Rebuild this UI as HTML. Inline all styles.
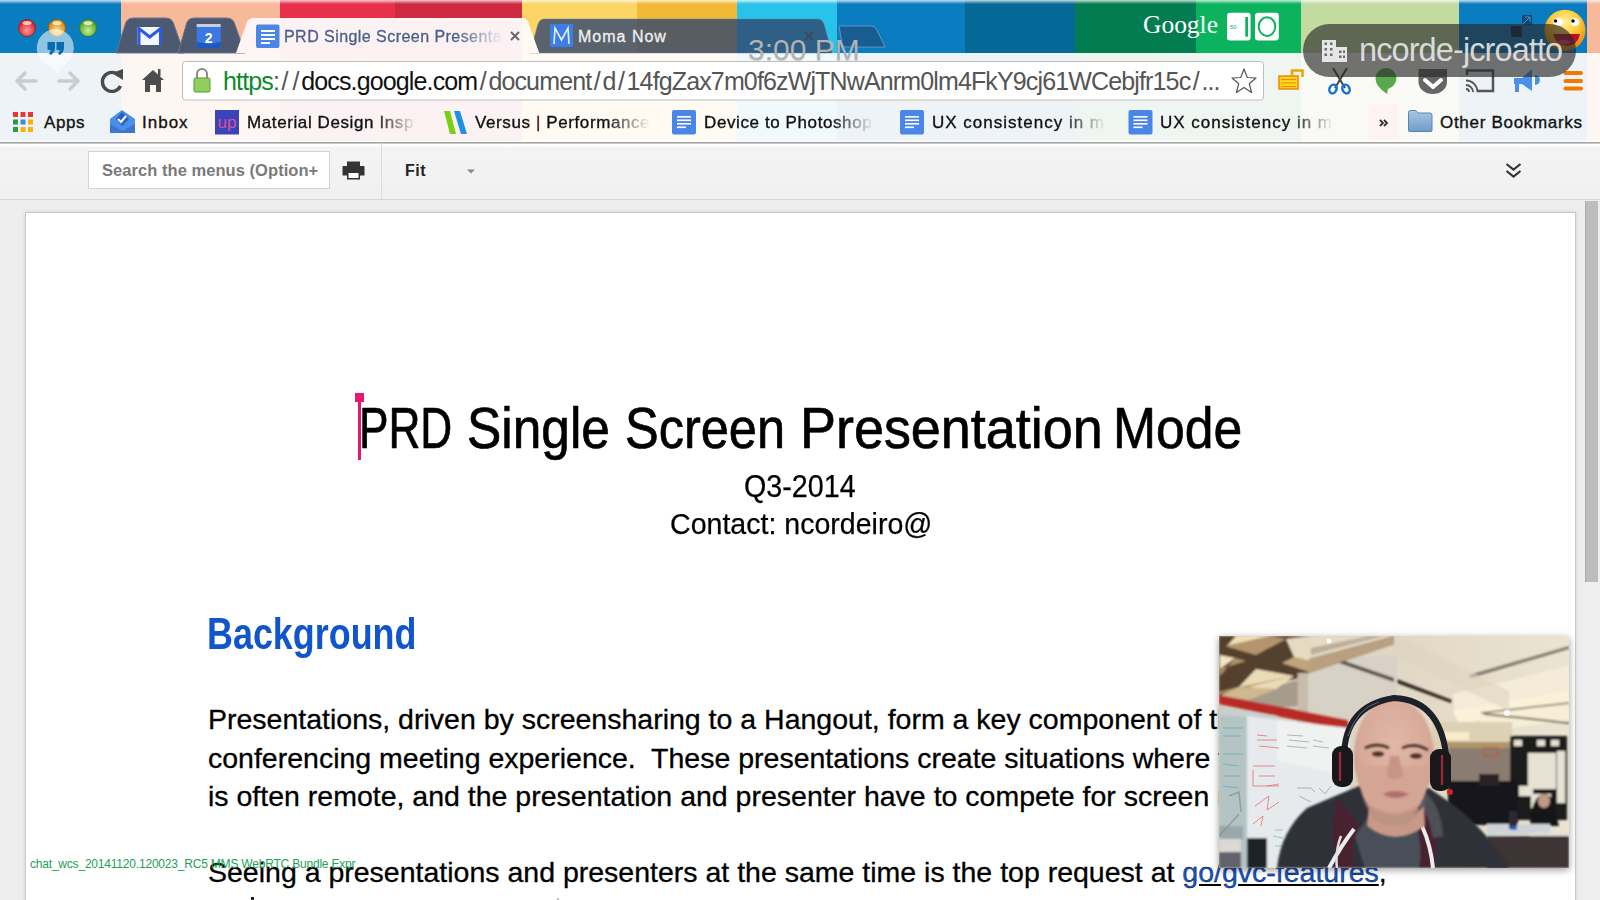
<!DOCTYPE html>
<html><head><meta charset="utf-8">
<style>
*{margin:0;padding:0;box-sizing:border-box}
html,body{width:1600px;height:900px;overflow:hidden;background:#eeeeee;font-family:"Liberation Sans",sans-serif;position:relative}
.a{position:absolute}
.stripe{position:absolute;top:0;height:53px}
.tint{position:absolute;top:53px;height:89px}
.bm{position:absolute;top:113px;font-size:17px;color:#111;white-space:nowrap;letter-spacing:0.6px;-webkit-text-stroke:0.35px #111}
.fade{-webkit-mask-image:linear-gradient(90deg,#000 75%,transparent 100%)}
.tabt{-webkit-mask-image:linear-gradient(90deg,#000 78%,transparent 100%)}
.doc{position:absolute;white-space:nowrap;color:#000}
.tt{top:395px;font-size:57px;-webkit-text-stroke:0.7px #000;transform-origin:0 0}
</style></head><body>

<!-- HEADER -->
<svg class="a" style="left:0;top:0" width="1600" height="143" viewBox="0 0 1600 143">
 <g>
  <rect x="0" y="0" width="121" height="53" fill="#0a7dc0"/>
  <rect x="121" y="0" width="159" height="53" fill="#f8b89a"/>
  <rect x="280" y="0" width="115" height="53" fill="#e8304a"/>
  <rect x="395" y="0" width="127" height="53" fill="#cd2940"/>
  <rect x="522" y="0" width="115" height="53" fill="#fdd466"/>
  <rect x="637" y="0" width="100" height="53" fill="#f2b937"/>
  <rect x="737" y="0" width="100" height="53" fill="#27c3ea"/>
  <rect x="837" y="0" width="128" height="53" fill="#0a7dc0"/>
  <rect x="965" y="0" width="110" height="53" fill="#066896"/>
  <rect x="1075" y="0" width="121" height="53" fill="#027c50"/>
  <rect x="1196" y="0" width="105" height="53" fill="#0bb35e"/>
  <rect x="1301" y="0" width="158" height="53" fill="#c2dca0"/>
  <rect x="1459" y="0" width="128" height="53" fill="#0a7dc0"/>
  <rect x="1587" y="0" width="13" height="53" fill="#f8b89a"/>
  <defs><linearGradient id="hl" x1="0" y1="0" x2="0" y2="1"><stop offset="0" stop-color="#fff" stop-opacity="0.75"/><stop offset="1" stop-color="#fff" stop-opacity="0"/></linearGradient></defs>
 <rect x="0" y="0" width="1600" height="4" fill="url(#hl)"/>
 </g>
 <g>
  <rect x="0" y="53" width="121" height="89" fill="#eef3f8"/>
  <rect x="121" y="53" width="159" height="89" fill="#fef6f3"/>
  <rect x="280" y="53" width="242" height="89" fill="#fcf2f3"/>
  <rect x="522" y="53" width="215" height="89" fill="#fffbf3"/>
  <rect x="737" y="53" width="100" height="89" fill="#f0f9fc"/>
  <rect x="837" y="53" width="238" height="89" fill="#eef3f8"/>
  <rect x="1075" y="53" width="226" height="89" fill="#eff6f1"/>
  <rect x="1301" y="53" width="158" height="89" fill="#f9faf6"/>
  <rect x="1459" y="53" width="128" height="89" fill="#eef3f8"/>
  <rect x="1587" y="53" width="13" height="89" fill="#fef6f3"/>
  <rect x="1368" y="104" width="31" height="36" fill="#fdf3f3"/>
  <rect x="0" y="140.5" width="1600" height="1.5" fill="#fff" opacity="0.8"/>
  <rect x="0" y="142" width="1600" height="1" fill="#a3a3a3"/>
 </g>
 <!-- traffic lights -->
 <defs>
  <radialGradient id="gr" cx="50%" cy="65%" r="55%"><stop offset="0" stop-color="#ff9a9a"/><stop offset="1" stop-color="#d8232a"/></radialGradient>
  <radialGradient id="go" cx="50%" cy="65%" r="55%"><stop offset="0" stop-color="#ffe08a"/><stop offset="1" stop-color="#d98a12"/></radialGradient>
  <radialGradient id="gg" cx="50%" cy="65%" r="55%"><stop offset="0" stop-color="#c8f0a0"/><stop offset="1" stop-color="#58a822"/></radialGradient>
 </defs>
 <circle cx="27" cy="28" r="8.5" fill="url(#gr)" stroke="#9a1a1a" stroke-width="0.8"/>
 <circle cx="57" cy="28" r="8.5" fill="url(#go)" stroke="#9a5a10" stroke-width="0.8"/>
 <circle cx="88" cy="28" r="8.5" fill="url(#gg)" stroke="#3a7a18" stroke-width="0.8"/>
 <ellipse cx="27" cy="23" rx="4.5" ry="2" fill="#fff" opacity="0.7"/>
 <ellipse cx="57" cy="23" rx="4.5" ry="2" fill="#fff" opacity="0.7"/>
 <ellipse cx="88" cy="23" rx="4.5" ry="2" fill="#fff" opacity="0.7"/>
 <!-- inactive tabs -->
 <path d="M544 19 Q540 19 538 24 L530 53 L832 53 L824 24 Q822 19 818 19 Z" fill="rgb(49,70,110)" fill-opacity="0.8" stroke="#5f7fa0" stroke-opacity="0.5" stroke-width="1"/>
 <path d="M839 26 L871 26 Q875 26 877 30 L885 47 L846 47 Q843 47 842 44 Z" fill="rgb(40,60,100)" fill-opacity="0.5" stroke="#8fb0d0" stroke-opacity="0.6"/>
 <path d="M116 53 L126 22 Q128 18 133 18 L166 18 Q171 18 173 22 L184 53 Z" fill="#4d5971" stroke="#6a7590" stroke-width="1"/>
 <path d="M178 53 L187 22 Q189 18 194 18 L227 18 Q232 18 234 22 L245 53 Z" fill="#4d5971" stroke="#6a7590" stroke-width="1"/>
 <!-- active tab -->
 <path d="M236 53 L247 22 Q249 18 254 18 L521 18 Q526 18 528 22 L539 53 Z" fill="#fdf5f3"/>
 <rect x="280" y="18" width="242" height="35" fill="#fcf2f3"/>
 <path d="M522 18 Q526 18 528 22 L539 53 L522 53 Z" fill="#fffbf3"/>
 <!-- tab icons -->
 <rect x="137.5" y="27" width="24.5" height="18" fill="#f4f6ff"/>
 <path d="M139 45 V28.5 L149.75 37 L160.5 28.5 V45" fill="none" stroke="#2a5ce0" stroke-width="3"/>
 <rect x="196.7" y="24" width="24" height="3" fill="#c8d0dc"/>
 <rect x="196.7" y="27" width="24" height="21" fill="#3a78e6"/>
 <path d="M196.7 42 L208.7 44 L220.7 42 V48 H196.7 Z" fill="#1f58c0"/>
 <text x="208.7" y="43" font-family="Liberation Sans" font-size="14" font-weight="bold" fill="#fff" text-anchor="middle">2</text>
 <rect x="256" y="24.5" width="23.5" height="23.5" rx="2" fill="#4a86e8"/>
 <rect x="261" y="30" width="14" height="2" fill="#fff"/>
 <rect x="261" y="34" width="14" height="2" fill="#fff"/>
 <rect x="261" y="38" width="14" height="2" fill="#fff"/>
 <rect x="261" y="42" width="9" height="2" fill="#fff"/>
 <rect x="550" y="24" width="23" height="23" fill="#3d7de8"/>
 <path d="M554 44 L555 28 L561.5 40 L568 28 L569 44" fill="none" stroke="#e8f0ff" stroke-width="1.6"/>
 <path d="M511 32 L519 40 M519 32 L511 40" stroke="#666" stroke-width="2"/>
 <path d="M805 32 L813 40 M813 32 L805 40" stroke="#3a4a5a" stroke-width="2"/>
 <!-- hangouts bubble -->
 <g fill="#fff" fill-opacity="0.55"><path d="M56 29 A19 19 0 0 0 51.5 66.5 L57 74 L66.5 63 A19 19 0 0 0 56 29 Z"/></g>
 <path d="M47.5 42 h7.5 v6 q0 4.5 -4.5 7 l-1.5 -1.5 q1.6 -1.5 1.6 -3.5 h-3.1 Z M56.5 42 h7.5 v6 q0 4.5 -4.5 7 l-1.5 -1.5 q1.6 -1.5 1.6 -3.5 h-3.1 Z" fill="#0a6cb0"/>
 <!-- google io -->
 <text x="1143" y="32.5" font-family="Liberation Serif" font-size="26" fill="#fff" textLength="75" lengthAdjust="spacingAndGlyphs">Google</text>
 <rect x="1227" y="12.8" width="23.6" height="27.6" rx="3" fill="#fff"/>
 <rect x="1255" y="12.8" width="23.8" height="27.6" rx="3" fill="#fff"/>
 <rect x="1245.3" y="17" width="2.7" height="19.7" fill="#0bb35e"/>
 <ellipse cx="1267" cy="26.6" rx="8.3" ry="9.3" fill="none" stroke="#0bb35e" stroke-width="2"/>
 <text x="1230" y="29" font-family="Liberation Sans" font-size="6" fill="#0bb35e">50</text>
 <!-- emoji -->
 <defs><radialGradient id="emo" cx="50%" cy="30%" r="65%"><stop offset="0" stop-color="#fff0a0"/><stop offset="0.55" stop-color="#ffc830"/><stop offset="1" stop-color="#e88a10"/></radialGradient></defs>
 <circle cx="1565" cy="30.3" r="20.5" fill="url(#emo)"/>
 <ellipse cx="1558" cy="22" rx="5" ry="4" fill="#fff"/>
 <ellipse cx="1575" cy="22" rx="4.5" ry="4" fill="#fff"/>
 <circle cx="1555.5" cy="21" r="1.8" fill="#111"/>
 <circle cx="1573" cy="21" r="1.8" fill="#111"/>
 <path d="M1553 34 L1580 34 Q1578 45 1567 46 Q1556 45 1553 34 Z" fill="#b8102a"/>
 <ellipse cx="1564" cy="42" rx="6" ry="2.5" fill="#e04060"/>
 <!-- expand icon -->
 <rect x="1522" y="15" width="10" height="10" fill="#0a4a78"/>
 <rect x="1511" y="26" width="11" height="11" fill="#06304e"/>
 <path d="M1522 25 L1530 17 M1525 17 H1530 V22" fill="none" stroke="#6ab0e0" stroke-width="1" opacity="0.7"/>
 <!-- nav icons -->
 <path d="M17 81 L36 81 M25 73 L17 81 L25 89" fill="none" stroke="#c9cdd2" stroke-width="3.5" stroke-linecap="round" stroke-linejoin="round"/>
 <path d="M59 81 L78 81 M70 73 L78 81 L70 89" fill="none" stroke="#c9cdd2" stroke-width="3.5" stroke-linecap="round" stroke-linejoin="round"/>
 <path d="M119 75.5 A9.5 9.5 0 1 0 120.5 86" fill="none" stroke="#4a4a4a" stroke-width="3.4"/>
 <path d="M112 73 L123 69 L123 80 Z" fill="#4a4a4a"/>
 <path d="M153 70 L142 80 L145 80 L145 92 L150 92 L150 85 L156 85 L156 92 L161 92 L161 80 L164 80 Z" fill="#4d4d4d"/>
 <rect x="158" y="69" width="2.5" height="7" fill="#4d4d4d"/>
 <!-- omnibox -->
 <rect x="182.5" y="61.5" width="1081" height="38.5" rx="3" fill="#fff" stroke="#bdbdbd"/>
 <rect x="194" y="78" width="16" height="14" rx="1.5" fill="#8fcf5c" stroke="#5a9a30"/>
 <path d="M197 78 V74 A5 5 0 0 1 207 74 V78" fill="none" stroke="#888" stroke-width="2"/>
 <path d="M1244 69 L1247.3 77.5 L1256 78 L1249.3 83.8 L1251.6 92.5 L1244 87.6 L1236.4 92.5 L1238.7 83.8 L1232 78 L1240.7 77.5 Z" fill="#fff" stroke="#555" stroke-width="1.2" stroke-linejoin="round"/>
 <!-- extension icons -->
 <rect x="1279" y="76" width="19" height="13" fill="#ffd21f" stroke="#f08a00" stroke-width="1.5"/>
 <path d="M1281 79.5 h15 M1281 83 h15 M1281 86.5 h15" stroke="#f08a00" stroke-width="1.2"/>
 <path d="M1292 76 V70.5 H1302.5 V77" fill="none" stroke="#f0a000" stroke-width="2.5"/>
 <path d="M1333 68 L1345 88 M1347 68 L1335 88" stroke="#444" stroke-width="2"/>
 <ellipse cx="1333" cy="89" rx="3.5" ry="4.5" fill="none" stroke="#1a6fd8" stroke-width="2.5" transform="rotate(25 1333 89)"/>
 <ellipse cx="1346" cy="89" rx="3.5" ry="4.5" fill="none" stroke="#1a6fd8" stroke-width="2.5" transform="rotate(-25 1346 89)"/>
 <path d="M1386 68 A10.5 10 0 0 1 1396.5 78 Q1396 86 1388 89 L1387 94 Q1375 86 1375.5 78 A10.5 10 0 0 1 1386 68 Z" fill="#5aa84d"/>
 <path d="M1418.5 69 H1447 V82 A14.25 12 0 0 1 1418.5 82 Z" fill="#666"/>
 <path d="M1425 80 L1433 87 L1441 80" fill="none" stroke="#fff" stroke-width="4" stroke-linecap="round" stroke-linejoin="round"/>
 <path d="M1467 75 V70.5 H1493 V91 H1477" fill="none" stroke="#555" stroke-width="2.5"/>
 <path d="M1466 85 A7 7 0 0 1 1473 92 M1466 80.5 A11.5 11.5 0 0 1 1477.5 92 M1466 89 A3 3 0 0 1 1469 92" fill="none" stroke="#555" stroke-width="1.8"/>
 <path d="M1514 78 H1522 L1532 69 V91 L1522 84 H1519 V92 H1515 V84 H1514 Z" fill="#4a8fe8"/>
 <path d="M1535 75 A5 5 0 0 1 1535 85 Z" fill="#4a8fe8"/>
 <rect x="1563.5" y="71" width="19.5" height="4" rx="2" fill="#f07a00"/>
 <rect x="1563.5" y="79" width="19.5" height="4" rx="2" fill="#f07a00"/>
 <rect x="1563.5" y="86.5" width="19.5" height="4" rx="2" fill="#f07a00"/>
 <!-- bookmark icons -->
 <g fill="#e33">
  <rect x="13" y="112" width="5" height="5"/><rect x="20.5" y="112" width="5" height="5"/><rect x="28" y="112" width="5" height="5" fill="#e33"/>
 </g>
 <rect x="13" y="119.5" width="5" height="5" fill="#2a9a4a"/><rect x="20.5" y="119.5" width="5" height="5" fill="#3a88f0"/><rect x="28" y="119.5" width="5" height="5" fill="#f5b400"/>
 <rect x="13" y="127" width="5" height="5" fill="#2a9a4a"/><rect x="20.5" y="127" width="5" height="5" fill="#f5b400"/><rect x="28" y="127" width="5" height="5" fill="#f5b400"/>
 <path d="M110 119 L122 110 L135 119 L135 133 L110 133 Z" fill="#4a8fe8"/>
 <path d="M110 124 L122.5 131 L135 124 L135 133 L110 133 Z" fill="#3a78d0"/>
 <path d="M116 119 L122 112 L129 119 L122 126 Z" fill="#2a5fc8"/>
 <path d="M118 119 L121 122 L126 116" fill="none" stroke="#fff" stroke-width="2"/>
 <rect x="215" y="110" width="24" height="24.5" fill="#3a44b8"/>
 <text x="227" y="128" font-family="Liberation Sans" font-size="17" fill="#d8509a" text-anchor="middle">up</text>
 <path d="M444 111 L450 111 L456 134 L450 134 Z" fill="#7ad012"/>
 <path d="M454 111 L460 111 L467 134 L461 134 Z" fill="#1e90e8"/>
 <g fill="#4a86e8">
  <rect x="672" y="110" width="24" height="24.5" rx="2"/>
  <rect x="900" y="110" width="24" height="24.5" rx="2"/>
  <rect x="1128.5" y="110" width="24" height="24.5" rx="2"/>
 </g>
 <g fill="#fff">
  <rect x="677" y="116" width="14" height="1.6"/><rect x="677" y="119.5" width="14" height="1.6"/><rect x="677" y="123" width="14" height="1.6"/><rect x="677" y="126.5" width="9" height="1.6"/>
  <rect x="905" y="116" width="14" height="1.6"/><rect x="905" y="119.5" width="14" height="1.6"/><rect x="905" y="123" width="14" height="1.6"/><rect x="905" y="126.5" width="9" height="1.6"/>
  <rect x="1133.5" y="116" width="14" height="1.6"/><rect x="1133.5" y="119.5" width="14" height="1.6"/><rect x="1133.5" y="123" width="14" height="1.6"/><rect x="1133.5" y="126.5" width="9" height="1.6"/>
 </g>
 <path d="M1380 120 L1383 123 L1380 126 M1384 120 L1387 123 L1384 126" fill="none" stroke="#333" stroke-width="1.8"/>
 <defs><linearGradient id="fold" x1="0" y1="0" x2="0" y2="1"><stop offset="0" stop-color="#a9c8e6"/><stop offset="1" stop-color="#6f9cc8"/></linearGradient></defs>
 <path d="M1408.5 112.5 Q1408.5 110.5 1410.5 110.5 L1416 110.5 L1418 113 L1430 113 Q1432 113 1432 115 L1432 130.5 Q1432 131.5 1431 131.5 L1409.5 131.5 Q1408.5 131.5 1408.5 130.5 Z" fill="url(#fold)" stroke="#5a84b0"/>
</svg>
<div class="a" style="left:223px;top:67px;font-size:25px;letter-spacing:-0.86px;white-space:nowrap;color:#555"><span style="color:#0a8a2a">https</span>:<span style="margin:0 2.5px">/</span><span style="margin:0 2.5px">/</span><span style="color:#111">docs.google.com</span><span style="margin:0 2.5px">/</span>document<span style="margin:0 2.5px">/</span>d<span style="margin:0 2.5px">/</span>14fgZax7m0f6zWjTNwAnrm0lm4FkY9cj61WCebjfr15c<span style="margin:0 2.5px">/</span>...</div>
<div class="bm" style="left:44px">Apps</div>
<div class="bm" style="left:142px;letter-spacing:1px">Inbox</div>
<div class="bm fade" style="left:247px;width:170px;overflow:hidden">Material Design Insp</div>
<div class="bm fade" style="left:475px;width:175px;overflow:hidden">Versus <span style="color:#7a1010">|</span> Performance</div>
<div class="bm fade" style="left:704px;width:170px;overflow:hidden">Device to Photoshop</div>
<div class="bm fade" style="left:932px;width:174px;overflow:hidden;letter-spacing:1px">UX consistency in mo</div>
<div class="bm fade" style="left:1160px;width:174px;overflow:hidden;letter-spacing:1px">UX consistency in mo</div>
<div class="bm" style="left:1440px;letter-spacing:0.7px">Other Bookmarks</div>
<div class="a tabt" style="left:284px;top:28px;width:220px;overflow:hidden;font-size:16px;white-space:nowrap;color:#4a5f88;letter-spacing:0.45px;-webkit-text-stroke:0.3px #4a5f88">PRD Single Screen Presentation Mode</div>
<div class="a" style="left:578px;top:28px;font-size:16px;white-space:nowrap;color:#f0f0f0;letter-spacing:1px;-webkit-text-stroke:0.3px #f0f0f0">Moma Now</div>
<div class="a" style="left:748px;top:33px;font-size:30px;white-space:nowrap;color:#b3b3b3;text-shadow:0 1px 1px rgba(0,0,0,0.15)">3:00 PM</div>
<!-- docs toolbar -->
<div class="a" style="left:0;top:143px;width:1600px;height:56px;background:linear-gradient(#c8c8c8 0,#c8c8c8 0.6px,#fff 1px,#fff 3px,#f4f4f4 4px,#f0f0f0 100%)"></div>
<div class="a" style="left:0;top:199px;width:1600px;height:1px;background:#d6d6d6"></div>
<div class="a" style="left:88px;top:151px;width:242px;height:38px;background:#fff;border:1px solid #d3d3d3"></div>
<div class="a" style="left:102px;top:161px;font-size:16.5px;font-weight:bold;color:#7a7a7a;white-space:nowrap;letter-spacing:0.05px">Search the menus (Option+</div>
<div class="a" style="left:381px;top:143px;width:1px;height:56px;background:#dcdcdc"></div>
<svg class="a" style="left:340px;top:158px" width="30" height="26" viewBox="0 0 30 26"><path d="M7 3.5 H20 V8 H7 Z" fill="#333"/><path d="M2.5 9 Q2.5 8 3.5 8 H23.5 Q24.5 8 24.5 9 V17.5 H20 V21.5 H7 V17.5 H2.5 Z" fill="#333"/><rect x="8.5" y="15" width="10" height="5" fill="#fff"/></svg>
<svg class="a" style="left:464px;top:167px" width="14" height="10" viewBox="0 0 14 10"><path d="M3 2.5 H11 L7 6.5 Z" fill="#888"/></svg>
<svg class="a" style="left:1500px;top:158px" width="28" height="26" viewBox="0 0 28 26"><path d="M6.5 6 L13.5 11.5 L20.5 6 M6.5 13 L13.5 18.5 L20.5 13" fill="none" stroke="#333" stroke-width="2.2"/></svg>
<div class="a" style="left:405px;top:162px;font-size:16px;font-weight:bold;color:#222;letter-spacing:0.5px">Fit</div>

<!-- page -->
<div class="a" style="left:25px;top:212px;width:1551px;height:700px;background:#fff;border:1px solid #c9c9c9;box-shadow:0 0 4px rgba(0,0,0,0.12)"></div>
<div class="a" style="left:1585px;top:200px;width:14px;height:700px;background:#efefef"></div>
<div class="a" style="left:1585px;top:201px;width:13px;height:381px;background:#bdbdbd;border-left:1px solid #aaa"></div>

<!-- document text -->
<div class="doc tt" style="left:358.9px;transform:scaleX(0.775)">PRD</div><div class="doc tt" style="left:467.2px;transform:scaleX(0.902)">Single</div><div class="doc tt" style="left:624.5px;transform:scaleX(0.886)">Screen</div><div class="doc tt" style="left:799.7px;transform:scaleX(0.946)">Presentation</div><div class="doc tt" style="left:1113.4px;transform:scaleX(0.907)">Mode</div>
<div class="a" style="left:358px;top:393px;width:3px;height:67px;background:#e8176f"></div>
<div class="a" style="left:355px;top:393px;width:9px;height:9px;background:#e8176f"></div>
<div class="doc" style="left:744px;top:469px;font-size:30.5px;-webkit-text-stroke:0.25px #000;transform:scaleX(0.94);transform-origin:0 0">Q3-2014</div>
<div class="doc" style="left:670px;top:507px;font-size:30px;-webkit-text-stroke:0.25px #000;transform:scaleX(0.952);transform-origin:0 0">Contact: ncordeiro@</div>
<div class="doc" style="left:207px;top:609px;font-size:44px;font-weight:bold;color:#1155cc;transform:scaleX(0.816);transform-origin:0 0">Background</div>
<div class="doc" style="left:208px;top:700px;font-size:28.5px;line-height:38.5px;-webkit-text-stroke:0.3px #000">Presentations, driven by screensharing to a Hangout, form a key component of the<br>conferencing meeting experience.&nbsp; These presentations create situations where the<br>is often remote, and the presentation and presenter have to compete for screen real</div>
<div class="doc" style="left:208px;top:853px;font-size:28.5px;line-height:38.5px;-webkit-text-stroke:0.3px #000">Seeing a presentations and presenters at the same time is the top request at <span style="color:#1155cc;text-decoration:underline">go/gvc-features</span>,</div>
<div class="a" style="left:251px;top:897px;width:3px;height:3px;background:#222"></div>
<div class="a" style="left:557px;top:898px;width:2px;height:2px;background:#bbb"></div>
<div class="a" style="left:30px;top:857px;font-size:12px;letter-spacing:-0.2px;color:#22a05a;white-space:nowrap">chat_wcs_20141120.120023_RC5 MMS WebRTC Bundle Expr</div>

<!-- video -->
<div class="a" style="left:1219px;top:636px;width:350px;height:232px;box-shadow:0 2px 7px rgba(0,0,0,0.4);overflow:hidden">
<svg width="350" height="232" viewBox="0 0 350 232">
 <defs>
  <linearGradient id="ceil" x1="0" y1="0" x2="1" y2="0"><stop offset="0" stop-color="#d4cab8"/><stop offset="1" stop-color="#ece4d2"/></linearGradient>
  <radialGradient id="skin" cx="50%" cy="40%" r="60%"><stop offset="0" stop-color="#e2b8a8"/><stop offset="0.75" stop-color="#d6a898"/><stop offset="1" stop-color="#c09080"/></radialGradient>
  <filter id="bl" x="-10%" y="-10%" width="120%" height="120%"><feGaussianBlur stdDeviation="1.2"/></filter>
  <filter id="bl2" x="-10%" y="-10%" width="120%" height="120%"><feGaussianBlur stdDeviation="2.5"/></filter>
 </defs>
 <rect width="350" height="232" fill="url(#ceil)"/>
 <g filter="url(#bl)">
  <!-- right ceiling light strips -->
  <path d="M234 58 L350 30 L350 60 L236 80 Z" fill="#f4ecd8"/>
  <path d="M234 75 L350 55 L350 70 L240 88 Z" fill="#faf2d8"/>
  <path d="M260 82 L350 68 L350 84 L265 96 Z" fill="#f6eed6"/>
  <path d="M250 39 L350 10 L350 13 L252 42 Z" fill="#5a5048" opacity="0.7"/><path d="M262 76 L350 66 L350 68 L262 78 Z" fill="#5a5048" opacity="0.6"/>
  <path d="M175 42 L233 64 L232 67 L175 46 Z" fill="#302820"/>
  <path d="M265 77 L350 86 L350 88 L265 79 Z" fill="#40342a" opacity="0.7"/>
  <!-- left wall under beams -->
  <rect x="88" y="20" width="90" height="64" fill="#d8d2c6"/>
  <path d="M88 12 L175 42 L175 46 L88 16 Z" fill="#3a3028" opacity="0.8"/>
  <path d="M18 60 L80 44 L84 70 L25 74 Z" fill="#a69c8c"/>
  <!-- beams -->
  <path d="M0 0 L175 0 L175 8 L90 37 L80 42 L0 60 Z" fill="#54402e"/>
  <path d="M17 0 L50 0 L38 9 L8 10 Z" fill="#efe0ba"/>
  <path d="M1 19 L16 22 L1 33 Z" fill="#f2e4c0"/>
  <path d="M37 33 L75 40 L57 53 L20 51 Z" fill="#ecdcb6"/>
  <path d="M75 21 L90 13 L90 25 Z" fill="#eadcc0"/>
  <path d="M6 10 L37 19 L67 3 L50 0 Z" fill="#b4946c"/>
  <path d="M1 33 L27 25 L16 22 L1 40 Z" fill="#b09068"/>
  <path d="M63 27 L90 36 L90 25 L75 21 Z" fill="#c0a47c"/>
  <path d="M0 58 L37 49 L75 40 L20 51 L0 56 Z" fill="#b8986c"/>
  <path d="M0 60 L20 51 L57 53 L30 64 Z" fill="#d0b890"/>
  <path d="M67 3 L92 0 L175 0 L90 23 L75 21 Z" fill="#e6dac2"/>
  <path d="M90 23 L175 0 L175 8 L90 37 Z" fill="#b8a080"/>
  <path d="M92 12 L150 0 L165 0 L92 19 Z" fill="#3a3028" opacity="0.25"/>
  <rect x="78.6" y="37" width="10.3" height="53" fill="#c8bcac"/>
  <!-- red stripe -->
  <path d="M0 59 L129 84 L129 95 L0 68 Z" fill="#b82a26"/>
  <!-- glass + whiteboard -->
  <path d="M0 72 L58 80 L58 116 L0 116 Z" fill="#c8d0d0"/>
  <path d="M0 79 L28 81 L28 232 L0 232 Z" fill="#b4c4c4"/>
  <path d="M28 80 L130 92 L132 232 L28 232 Z" fill="#e6eaec"/>
  <path d="M58 84 L130 93 L130 140 L58 125 Z" fill="#f0f2f2"/>
  <rect x="0" y="190" width="24" height="14" fill="#9aa8a8"/>
  <rect x="0" y="203" width="22" height="13" fill="#dcd8d4"/>
  <rect x="0" y="216" width="22" height="16" fill="#60646a"/>
  <rect x="28" y="202" width="20" height="30" fill="#1e2026"/>
  <!-- back office right -->
  <rect x="213" y="86" width="80" height="60" fill="#ddd0b4"/>
  <rect x="224" y="96" width="26" height="8" fill="#f8eccc"/>
  <rect x="226" y="106" width="66" height="6" fill="#b09468"/>
  <rect x="229" y="112" width="62" height="35" fill="#8a7c70"/>
  <path d="M265 112 h14 v8 h-14 Z" fill="none" stroke="#c05030" stroke-width="1"/>
  <path d="M175 -2 L290 55 L290 75 L175 20 Z" fill="#ddd4c0" opacity="0.6"/>
  <rect x="291" y="100" width="57" height="84" fill="#1c1a1e"/>
  <g fill="#e6e2d4"><rect x="309" y="117" width="28" height="36"/><rect x="300" y="150" width="14" height="10"/><rect x="312" y="158" width="20" height="14"/><rect x="338" y="115" width="8" height="52"/><rect x="295" y="104" width="8" height="6"/><rect x="318" y="104" width="8" height="6"/><rect x="332" y="104" width="8" height="6"/></g>
  <rect x="229" y="145" width="70" height="44" fill="#16161a"/>
  <rect x="260" y="138" width="20" height="12" fill="#2a2424"/>
  <path d="M311 190 Q312 160 325 158 Q336 160 336 175 L340 190 Z" fill="#141418"/>
  <ellipse cx="325" cy="165" rx="6" ry="7" fill="#c09a86"/>
  <path d="M268 188 L331 188 L331 198 L268 200 Z" fill="#cfd3d8"/>
  <path d="M311 197 L350 196 L350 208 L311 208 Z" fill="#e2deda"/>
  <rect x="268" y="200" width="82" height="32" fill="#3e3634"/>
  <rect x="290" y="175" width="8" height="18" fill="#2a2a30"/>
  <rect x="292" y="190" width="6" height="4" fill="#2060c0"/>
 </g>
 <!-- whiteboard scribbles -->
 <g fill="none" stroke-width="0.8" opacity="0.75">
  <path d="M38 99 L48 100 M38 104 L58 104 M40 110 L60 112 M34 130 L56 130 M34 134 L34 150 L60 150 M40 140 L56 140 M36 170 L50 160 L48 174 L60 166 M34 188 L44 180 L42 190 M48 150 L60 148" stroke="#e04848"/>
  <path d="M68 99 L84 100 M70 104 L90 106 M68 110 L88 112 M94 104 L104 106 M94 110 L110 112 M78 152 L92 152 L96 156 M80 160 L92 166 M100 152 L106 158 L112 150" stroke="#606060" opacity="0.7"/>
  <path d="M4 92 L24 92 M4 100 L22 100 M4 118 L24 118 M4 128 L20 130 M4 140 L22 140 M4 150 L20 152 M56 194 L64 194 M54 200 L64 202 M56 210 L64 210" stroke="#30a0a0" opacity="0.8"/>
  <path d="M10 160 L20 156 L22 176 M0 200 L20 178" stroke="#8090a0" stroke-width="1.5"/>
 </g>
 <!-- hoodie -->
 <g filter="url(#bl)">
  <path d="M58 232 Q62 195 88 172 L128 155 L140 150 L210 152 L236 170 Q268 195 290 232 Z" fill="#2e3038"/>
  <path d="M136 200 L146 232 L200 232 L210 200 L196 180 L150 180 Z" fill="#4a5058"/>
  <path d="M118 160 Q110 200 118 232 L136 232 Q130 210 140 190 Z" fill="#4a2030"/>
  <path d="M210 160 Q224 200 214 232 L200 232 Q204 210 196 186 Z" fill="#4a2030"/>
  <path d="M206 156 Q222 170 224 200 L214 202 Q210 176 198 166 Z" fill="#505058"/>
 </g>
 <path d="M135 193 Q122 210 110 232" stroke="#ececec" stroke-width="4" fill="none"/>
 <path d="M122 200 Q116 215 118 232" stroke="#e0e0e0" stroke-width="2.5" fill="none"/>
 <path d="M203 190 Q212 210 214 232" stroke="#ececec" stroke-width="4" fill="none"/>
 <!-- neck + head -->
 <g filter="url(#bl)">
  <path d="M150 170 Q175 200 205 170 L206 190 Q176 212 148 190 Z" fill="#c89888"/>
  <ellipse cx="175" cy="120" rx="40" ry="58" fill="url(#skin)"/>
  <path d="M138 130 Q140 178 175 192 Q208 178 212 130 Z" fill="#d4a494"/>
  <path d="M150 168 Q175 185 200 168 L198 182 Q175 196 152 182 Z" fill="#c49484" opacity="0.7"/>
 </g>
 <g filter="url(#bl)">
  <path d="M146 112 Q158 106 170 112" stroke="#3a2820" stroke-width="2.4" fill="none"/>
  <path d="M183 112 Q196 106 209 114" stroke="#3a2820" stroke-width="2.4" fill="none"/>
  <ellipse cx="159" cy="118" rx="6" ry="2.6" fill="#4a3028"/>
  <ellipse cx="197" cy="120" rx="6" ry="2.6" fill="#4a3028"/>
  <path d="M171 120 L168 140 Q175 146 184 140 L180 120" fill="#c89484"/>
  <path d="M164 158 Q176 152 190 158 Q176 166 164 158 Z" fill="#b07070"/>
 </g>
 <!-- headphones -->
 <path d="M125 124 Q124 70 175 62 Q224 64 228 128" stroke="#1c2028" stroke-width="6" fill="none"/>
 <path d="M129 100 Q138 72 160 66" stroke="#8a96a8" stroke-width="1" fill="none" opacity="0.6"/>
 <rect x="113" y="110" width="21" height="41" rx="9" fill="#18181c"/>
 <rect x="211" y="113" width="21" height="42" rx="9" fill="#18181c"/>
 <path d="M121 116 L121 145" stroke="#a02838" stroke-width="2.2"/>
 <path d="M223 119 L223 149" stroke="#a02838" stroke-width="2.2"/>
 <path d="M142 160 Q150 185 175 192 Q200 185 208 160 Q200 176 175 180 Q150 176 142 160 Z" fill="#a88878" opacity="0.35" filter="url(#bl)"/>
 <circle cx="231" cy="156" r="3" fill="#d02020"/>
 <circle cx="110" cy="5" r="2.5" fill="#fff"/>
 <circle cx="288" cy="77" r="3" fill="#fff"/>
</svg></div>

<!-- pill -->
<div class="a" style="left:1303px;top:24px;width:273px;height:53px;border-radius:27px;background:rgba(40,40,40,0.65)"></div>
<svg class="a" style="left:1320px;top:38px" width="30" height="26" viewBox="0 0 30 26"><g fill="#e6e6e6"><rect x="2" y="2" width="14" height="22"/><rect x="16" y="9" width="11" height="15"/></g><g fill="#6a6a6a"><rect x="4.5" y="4.5" width="2.5" height="2.5"/><rect x="10" y="4.5" width="2.5" height="2.5"/><rect x="4.5" y="10" width="2.5" height="2.5"/><rect x="10" y="10" width="2.5" height="2.5"/><rect x="4.5" y="15.5" width="2.5" height="2.5"/><rect x="10" y="15.5" width="2.5" height="2.5"/><rect x="19" y="12.5" width="2.5" height="2.5"/><rect x="19" y="17.5" width="2.5" height="2.5"/><rect x="23" y="12.5" width="2" height="2.5"/><rect x="23" y="17.5" width="2" height="2.5"/></g></svg>
<div class="a" style="left:1359px;top:32px;font-size:32.5px;letter-spacing:-0.9px;color:rgba(235,235,235,0.88);white-space:nowrap">ncorde-jcroatto</div>

</body></html>
